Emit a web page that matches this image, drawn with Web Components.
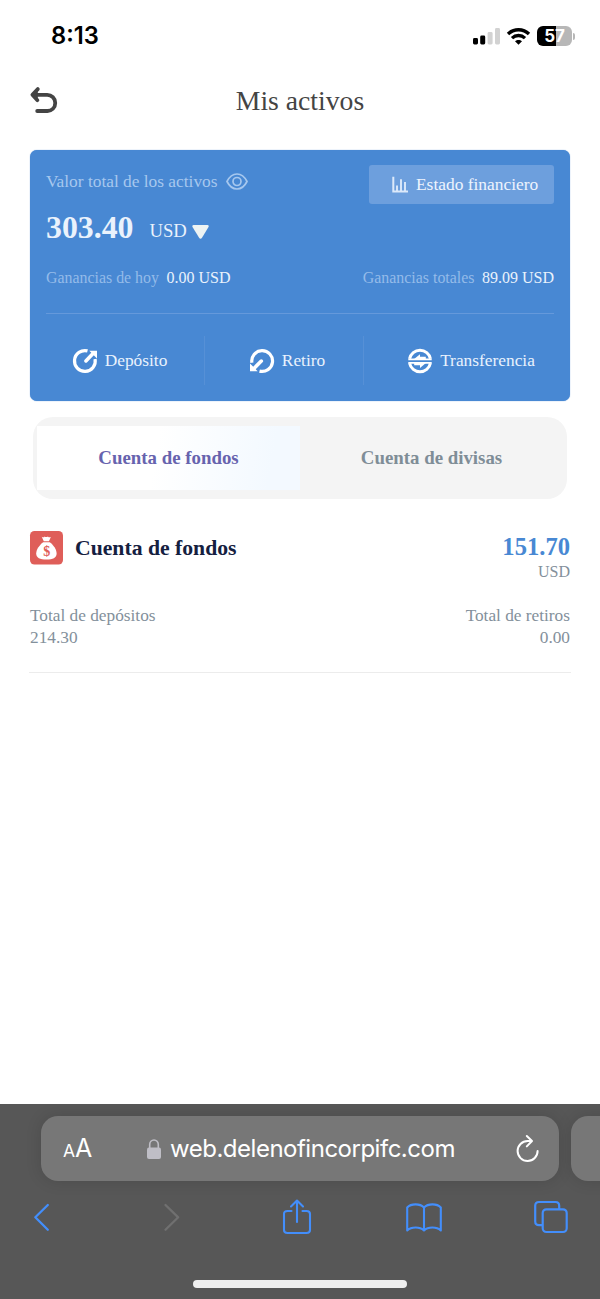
<!DOCTYPE html>
<html lang="es">
<head>
<meta charset="utf-8">
<title>Mis activos</title>
<style>
html,body{margin:0;padding:0}
body{background:#fff;width:600px;height:1299px;overflow:hidden;font-family:"Liberation Serif",serif}
</style>
</head>
<body>
<assets-app></assets-app>
<script>
function define(name, css, html){
  const t=document.createElement('template');
  t.innerHTML='<style>*{box-sizing:border-box}svg{display:block;flex:none;overflow:visible}'+css+'</style>'+html;
  customElements.define(name,class extends HTMLElement{
    constructor(){super();this.attachShadow({mode:'open'}).appendChild(t.content.cloneNode(true));}
  });
}

define('status-bar',`
:host{display:flex;height:72px;align-items:center;justify-content:space-between;padding:0 25px 0 51px;font-family:Inter,sans-serif;color:#000}
.time{font-size:23.7px;font-weight:600;line-height:28px;letter-spacing:0}
.right{display:flex;align-items:center}
.wifi{margin:0 7px 0 7px}
.bat{display:flex;align-items:center}
.body{width:35px;height:20px;border-radius:6px;background:linear-gradient(90deg,#000 0 19.5px,#b7b7b7 19.5px);color:#fff;font-size:17px;font-weight:700;line-height:20px;text-align:center;letter-spacing:-.2px}
.cap{width:2px;height:7px;margin-left:1px;border-radius:0 2px 2px 0;background:#b7b7b7}
`,`<span class="time">8:13</span>
<div class="right">
<svg width="27" height="17" viewBox="0 0 27 17"><rect x="0" y="10" width="5" height="6.5" rx="1.4"/><rect x="7.2" y="7.5" width="5" height="9" rx="1.4"/><rect x="14.6" y="4" width="5" height="12.5" rx="1.4" fill="#d2d2d2"/><rect x="22" y="0" width="5" height="16.5" rx="1.4" fill="#d2d2d2"/></svg>
<svg class="wifi" width="23" height="17" viewBox="0 0 23 17"><g fill="none" stroke="#000" stroke-width="3.300"><path d="M1 6C6.7.3 16.3.3 22 6"/><path d="M5 10.1c3.7-3.5 9.3-3.5 13 0"/></g><path d="M11.5 16.7 8 13.3c2-1.9 5-1.9 7 0z"/></svg>
<div class="bat"><div class="body">57</div><div class="cap"></div></div>
</div>`);

define('page-header',`
:host{display:grid;grid-template-columns:1fr auto 1fr;align-items:center;height:56px;padding:0 30px;font-size:27.7px;line-height:32px;color:#444}
.title{padding-top:2px}
`,`<svg width="28" height="28" viewBox="0 0 28 28" fill="none" stroke="#444" stroke-width="3.8" stroke-linecap="round" stroke-linejoin="round"><path d="M7.8 3.1 2.4 8.7l5 5.5M3.4 8.8h13.8a8 8 0 0 1 8 8v.4a7.700 7.700 0 0 1-7.800 7.800H7.200"/><path d="M7 5.500 3.500 8.700 7 12z" fill="#444" stroke-width="1"/></svg><span class="title"><slot></slot></span><span></span>`);

define('finance-button',`
:host{display:flex;align-items:center;width:185px;height:39px;border-radius:3px;background:#6d9fdd;padding-left:23px;color:#eef4fd;font-size:17.4px;line-height:20px}
svg{margin-right:8px}
span{padding-bottom:2px}
`,`<svg width="16" height="17" viewBox="0 0 16 17" fill="none" stroke="#dce9fa" stroke-width="2"><path d="M1.3.7v14.8H16"/><path d="M5 15V9.500M9 15V3.200M13 15V6" stroke-width="1.9"/></svg><span><slot></slot></span>`);

define('card-action',`
:host{display:flex;align-items:center;justify-content:center;height:49px;font-size:17.35px;line-height:48px;color:#e9f2fd}
slot[name=icon]{display:block}
.i{margin-right:8px;display:flex}
`,`<span class="i"><slot name="icon"></slot></span><slot></slot>`);

define('balance-card',`
:host{display:block;margin:21.500px 30px 0;height:251px;border-radius:7px;background:#4888d3;padding:15.500px 16px 16px;color:#eaf2fc;box-shadow:0 0 1px #4888d3}
.top{display:flex;justify-content:space-between;height:62px}
.label{display:flex;align-items:center;gap:8.500px;height:33px;font-size:17.350px;line-height:33px;color:#a6c7ee}
.left{display:flex;flex-direction:column}
.amount{display:flex;align-items:center;height:36px;line-height:36px;margin-top:12px}
.amount b{font-size:31.800px}
.usd{font-size:18.700px;margin:5px 5px 0 16px}
.amount svg{margin-top:7px}
.gains{display:flex;justify-content:space-between;margin-top:41px;height:20px;line-height:20px;font-size:16px}
.gains span span{color:#94bbe9;margin-right:7.500px;font-size:15.900px}
.rule{height:1px;background:#6599db;margin:25px 0 22px}
.acts{display:grid;grid-template-columns:174px 159px 1fr;margin-left:-16px;margin-right:-15px}
.acts>*+*{border-left:1px solid #5690d6}
card-action:nth-child(1){padding-left:6px}
card-action:nth-child(2){padding-left:7px}
card-action:nth-child(3){padding-left:10px}
`,`<div class="top"><div class="left"><div class="label"><span>Valor total de los activos</span>
<svg width="22" height="17" viewBox="0 0 22 17" fill="none" stroke="#a6c7ee" stroke-width="1.7"><path d="M1 8.5C6-1.5 16-1.5 21 8.5 16 18.5 6 18.5 1 8.5z"/><circle cx="11" cy="8.5" r="4"/></svg></div>
<div class="amount"><b>303.40</b><span class="usd">USD</span><svg width="17" height="14" viewBox="0 0 17 14"><path d="M1.500 0h14c1.200 0 1.600 1 1 2L10 12.800c-.8 1.200-2.100 1.200-2.900 0L.5 2C0 1 .4 0 1.500 0z" fill="#edf3f3"/></svg></div></div>
<finance-button>Estado financiero</finance-button></div>
<div class="gains"><span><span>Ganancias de hoy</span>0.00 USD</span><span><span>Ganancias totales</span>89.09 USD</span></div>
<div class="rule"></div>
<div class="acts">
<card-action><svg slot="icon" width="24" height="24" viewBox="0 0 24 24"><path d="M14.500 1.900A10.400 10.400 0 1 0 22.100 10" fill="none" stroke="#fff" stroke-width="3.200"/><path d="M12.900 11.900 20 4.600" stroke="#fff" stroke-width="3.600" stroke-linecap="round"/><path d="M16.300 1.700H24v7.700z" fill="#fff"/></svg>Depósito</card-action>
<card-action><svg slot="icon" width="24" height="24" viewBox="0 0 24 24"><path d="M1.900 13.800A10.400 10.400 0 1 1 9.500 22.100" fill="none" stroke="#fff" stroke-width="3.200"/><path d="M11.300 12.100 4 19.400" stroke="#fff" stroke-width="3.600" stroke-linecap="round"/><path d="M7.700 22.300H0v-7.700z" fill="#fff"/></svg>Retiro</card-action>
<card-action><svg slot="icon" width="24" height="24" viewBox="0 0 24 24" fill="none" stroke="#fff"><path d="M1.600 9.800a10.600 10.600 0 0 1 20.800 0M1.600 14.200a10.600 10.600 0 0 0 20.800 0" stroke-width="3"/><path d="M.3 10.300h23.400M.3 13.800h23.400" stroke-width="1.800"/><path d="M5.500 10.600 12 5.200v2.600h5.800v2.800zM18.500 13.500 12 18.900v-2.600H6.200v-2.800z" fill="#fff" stroke="none"/></svg>Transferencia</card-action>
</div>`);

define('account-tabs',`
:host{display:grid;grid-template-columns:263px 263px;margin:16.500px 33px 0;padding:9px 4px;height:82px;border-radius:20px;background:#f4f4f4;font-size:18.850px;font-weight:bold;line-height:63px;text-align:center;color:#7f8d97}
::slotted([active]){background:linear-gradient(100deg,#fff 45%,#f3f9ff 88%);color:#6763ae}
`,`<slot></slot>`);

define('account-summary',`
:host{display:block;padding:0 1px;height:142px;border-bottom:1px solid #ececec;color:#83909b}
.head{display:flex;height:50px}
h2{margin:0 0 0 12px;font-size:21.700px;line-height:34px;color:#15203f;flex:1}
.money{text-align:right;font-size:16px;line-height:20px}
.money b{display:block;font-size:24.600px;line-height:31px;color:#4888d3}
.tot{display:flex;justify-content:space-between;font-size:17.300px;line-height:22px;margin-top:24px}
.tot div:last-child{text-align:right}
`,`<div class="head"><svg width="33" height="34" viewBox="0 0 33 34"><rect width="33" height="33.5" rx="4.5" fill="#df5e59"/><path d="M11.700 5.800c1.500.9 2.300.7 2.900-.4.9.9 2.400.9 3.300 0 .8 1.100 1.700 1.200 3 .5l-2 4.400h-5.100z" fill="#fff"/><path d="M13.200 11.200h6.600c3.500 2.700 6.800 7 6.800 11.300 0 4.400-3.700 6-10.200 6s-10.200-1.600-10.200-6c0-4.300 3.500-8.600 7-11.300z" fill="#fff"/><text x="16.700" y="24.900" text-anchor="middle" font-family="Liberation Serif,serif" font-weight="bold" font-size="14" fill="#df5e59">$</text></svg><h2>Cuenta de fondos</h2><div class="money"><b>151.70</b>USD</div></div>
<div class="tot"><div>Total de depósitos<br>214.30</div><div>Total de retiros<br>0.00</div></div>`);

define('browser-bar',`
:host{display:flex;flex-direction:column;height:195px;background:#575757;color:#fff;font-family:Inter,sans-serif}
.urls{display:flex;gap:12px;padding:12px 0 0 41px;overflow:hidden;height:97px;flex:none}
.field{display:flex;flex:none;align-items:center;width:518px;height:65px;border-radius:17px;background:#777;box-shadow:0 0 16px rgba(0,0,0,.13)}
.aa{display:flex;align-items:baseline;width:106px;padding-left:22px;line-height:64px;font-size:25px;padding-top:2px}
.aa small{font-size:17.500px}
.url{font-size:24px;line-height:65px;width:346px;margin-left:9px;white-space:nowrap;letter-spacing:-.490px}
.tools{display:grid;grid-template-columns:129px 121px 123px 128px 34px;align-items:center;padding-left:33px;height:38px;margin-top:-3px}
.home{width:214px;height:7.500px;border-radius:4px;background:#efefef;margin:44px auto 0}
`,`<div class="urls"><div class="field"><span class="aa"><small>A</small>A</span>
<svg width="14" height="20" viewBox="0 0 14 20"><rect y="8.500" width="14" height="11.500" rx="2" fill="#bfbec6"/><path d="M2.700 9V5.500a4.300 4.500 0 0 1 8.600 0V9" fill="none" stroke="#bfbec6" stroke-width="1.600"/></svg>
<span class="url">web.delenofincorpifc.com</span>
<svg width="24" height="28" viewBox="0 0 24 28" fill="none" stroke="#fff" stroke-width="2" stroke-linecap="round" stroke-linejoin="round"><path d="M21.600 15.900A10 10 0 1 1 11.600 6h4.200M10.800 1l5.200 5-5.200 5.400"/></svg></div><div class="field"></div></div>
<div class="tools">
<svg width="18" height="28" viewBox="0 0 18 28" fill="none" stroke="#438efb" stroke-width="2.300" stroke-linecap="round" stroke-linejoin="round"><path d="M14.800 2 2.300 14.300l12.500 12.500"/></svg>
<svg width="18" height="28" viewBox="0 0 18 28" fill="none" stroke="#707070" stroke-width="2.300" stroke-linecap="round" stroke-linejoin="round"><path d="m3.500 2 12.700 12.300L3.500 26.800"/></svg>
<svg width="28" height="36" viewBox="0 0 28 36" fill="none" stroke="#438efb" stroke-width="2.100" stroke-linecap="round" stroke-linejoin="round"><path d="M8.500 12H4.500C2 12 1 13 1 15v16c0 2 1 3 3.500 3h19c2.500 0 3.500-1 3.500-3V15c0-2-1-3-3.500-3h-4M14 23V2M8 7.500l6-6 6 6"/></svg>
<svg width="36" height="29" viewBox="0 0 36 29" fill="none" stroke="#438efb" stroke-width="2.100" stroke-linejoin="round"><path d="M18 4.500C14 .300 5 .300 1.200 4.500v23c4-4 12.800-4 16.800 0 4-4 12.800-4 16.800 0v-23C31 .300 22 .300 18 4.500zm0 0v23"/></svg>
<svg width="34" height="32" viewBox="0 0 34 32" fill="none" stroke="#438efb" stroke-width="2.200"><path d="M8.500 24.200H5c-2.500 0-3.800-1.200-3.800-3.600V4.800C1.200 2.300 2.500 1 5 1h16.500c2.500 0 3.700 1.300 3.700 3.800v3.300"/><rect x="8.700" y="8.300" width="24" height="22.700" rx="3.700"/></svg>
</div><div class="home"></div>`);

define('assets-app',`
:host{display:flex;flex-direction:column;width:600px;height:1299px}
browser-bar{margin-top:auto}
account-summary{margin:31.500px 29px 0}
`,`<status-bar></status-bar><page-header>Mis activos</page-header><balance-card></balance-card>
<account-tabs><div active>Cuenta de fondos</div><div>Cuenta de divisas</div></account-tabs>
<account-summary></account-summary><browser-bar></browser-bar>`);
</script>
</body>
</html>
